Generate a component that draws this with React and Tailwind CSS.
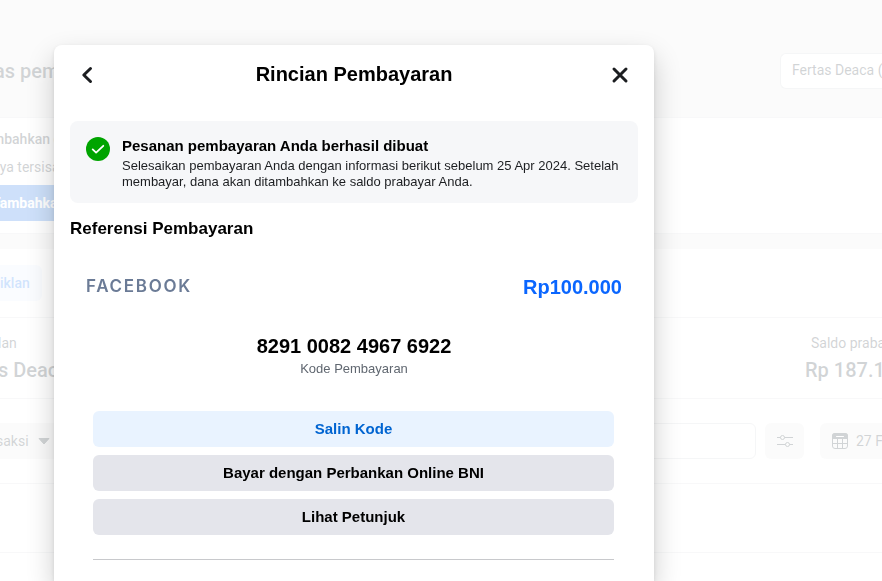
import React, { useState } from 'react';

const CalendarIcon = () => (
  <svg width="16" height="16" viewBox="0 0 16 16" fill="none" stroke="#1c2b33" aria-hidden="true">
    <rect x="0.5" y="0.5" width="15" height="15" rx="2.5" />
    <path d="M0 3a3 3 0 0 1 3-3h10a3 3 0 0 1 3 3v3H0z" fill="#1c2b33" stroke="none" />
    <path d="M5.5 6v9.5M10.5 6v9.5M0.5 10.5h15" />
    <path d="M4.5 3.5h7" stroke="#fff" strokeLinecap="round" />
  </svg>
);

const FilterIcon = () => (
  <svg width="16" height="14" viewBox="0 0 16 14" fill="none" stroke="#1c2b33" aria-hidden="true">
    <circle cx="5.5" cy="3.5" r="2" />
    <circle cx="10.5" cy="10.5" r="2" />
    <path d="M0 3.5h3.5M7.5 3.5H16M0 10.5h8.5M12.5 10.5H16" />
  </svg>
);

const CaretIcon = () => (
  <svg width="12" height="7" viewBox="0 0 12 7" aria-hidden="true">
    <path d="M1 0.5h10L6 6z" fill="#1c2b33" stroke="#1c2b33" strokeLinejoin="round" />
  </svg>
);

const CheckBadge = () => (
  <svg width="24" height="24" viewBox="0 0 24 24" fill="none" className="shrink-0" aria-hidden="true">
    <circle cx="12" cy="12" r="12" fill="#00a400" />
    <path d="M6.7 12.4l3.4 3.2 7.2-6.8" stroke="#fff" strokeWidth="1.8" strokeLinecap="round" strokeLinejoin="round" />
  </svg>
);

const BillingPage = () => (
  <div className="flex min-h-screen flex-col overflow-hidden whitespace-nowrap bg-[#ebebeb] font-['Roboto',sans-serif] text-sm text-[#1c2b33]">
    <header className="flex h-[117px] items-center justify-between pt-6">
      <h1 className="-ml-1.5 text-xl font-medium">as pembayaran</h1>
      <button className="h-9 w-[102px] overflow-hidden rounded-l-md border border-r-0 border-[#ccd0d5] bg-white pb-0.5 pl-[11px] text-left">
        Fertas Deaca (
      </button>
    </header>

    <section className="h-[117px] border-y border-[#dadde1] bg-white pt-[11px]">
      <div className="-ml-2">
        <h2 className="font-medium leading-5">mbahkan dana</h2>
        <p className="mt-2 leading-5">nya tersisa</p>
        <button className="mt-2 h-9 bg-[#0a66e4] pr-4 font-bold text-white">Tambahkan</button>
      </div>
    </section>

    <section className="mt-[15px] grow bg-white">
      <div className="flex h-[68px] items-center">
        <button className="h-9 rounded-r-md bg-[#e3edff] pr-3 font-medium text-[#1877f2]">iklan</button>
      </div>

      <dl className="flex h-[82px] justify-between border-y border-[#dadde1] pt-[15px]">
        <div className="-ml-0.5">
          <dt className="leading-5">lan</dt>
          <dd className="mt-[3px] text-xl font-medium leading-7">s Deaca</dd>
        </div>
        <div className="w-[77px]">
          <dt className="pl-1.5 leading-5">Saldo prabayar</dt>
          <dd className="mt-[3px] text-xl font-medium leading-7">Rp 187.1</dd>
        </div>
      </dl>

      <div className="flex h-[85px] items-center border-b border-[#dadde1]">
        <button className="-ml-1 flex h-9 w-[68px] items-center justify-between bg-[#ebebeb] pr-3.5">
          saksi
          <CaretIcon />
        </button>
        <input
          type="search"
          aria-label="Cari transaksi"
          className="ml-2 h-9 min-w-0 grow rounded-md border border-[#ccd0d5] bg-white"
        />
        <button aria-label="Filter" className="ml-[9px] flex h-9 w-[39px] items-center justify-center rounded-md bg-[#ebebeb]">
          <FilterIcon />
        </button>
        <button className="ml-4 flex h-9 w-[62px] items-center gap-2 overflow-hidden rounded-l-md bg-[#ebebeb] pl-3">
          <span className="shrink-0"><CalendarIcon /></span>
          27 F
        </button>
      </div>
      <div className="h-[69px] border-b border-[#dadde1]" />
    </section>
  </div>
);

const PaymentDialog = ({ onClose }) => {
  const code = '8291 0082 4967 6922';

  const handleCopy = () => {
    navigator.clipboard.writeText(code.replaceAll(' ', ''));
  };

  return (
    <div
      role="dialog"
      aria-labelledby="dialog-title"
      className="w-full max-w-[600px] rounded-t-lg bg-white px-4 shadow-[0_12px_28px_rgba(0,0,0,0.2),0_2px_4px_rgba(0,0,0,0.1)]"
    >
      <header className="flex h-[60px] items-center justify-between px-2">
        <button aria-label="Kembali" onClick={onClose} className="flex size-5 items-center justify-center">
          <svg width="20" height="20" viewBox="0 0 20 20" fill="none" stroke="#1c1e21" strokeWidth="3" strokeLinecap="round" strokeLinejoin="round">
            <path d="M12.5 3.5L5.8 10l6.7 6.5" />
          </svg>
        </button>
        <h1 id="dialog-title" className="pb-0.5 text-xl font-bold leading-6">Rincian Pembayaran</h1>
        <button aria-label="Tutup" onClick={onClose} className="flex size-5 items-center justify-center">
          <svg width="20" height="20" viewBox="0 0 20 20" fill="none" stroke="#1c1e21" strokeWidth="3" strokeLinecap="round">
            <path d="M4 4l12 12M16 4L4 16" />
          </svg>
        </button>
      </header>

      <div className="mt-4 flex gap-3 rounded-lg bg-[#f6f7f9] px-4 pb-[13px] pt-4">
        <CheckBadge />
        <div>
          <h2 className="text-[15px] font-bold leading-[18px]">Pesanan pembayaran Anda berhasil dibuat</h2>
          <p className="mt-[3px] text-[13px] leading-4 text-[#1c1e21]">
            Selesaikan pembayaran Anda dengan informasi berikut sebelum 25 Apr 2024. Setelah membayar, dana akan
            ditambahkan ke saldo prabayar Anda.
          </p>
        </div>
      </div>

      <h2 className="mt-4 text-[17px] font-bold leading-5">Referensi Pembayaran</h2>

      <div className="mt-9 flex items-center justify-between px-4">
        <span className="pb-0.5 font-['Inter',sans-serif] text-[17px] font-semibold leading-5 tracking-widest text-[#6b7b96]">
          FACEBOOK
        </span>
        <span className="text-xl font-bold leading-6 text-[#0a66ff]">Rp100.000</span>
      </div>

      <div className="mt-[35px] text-center">
        <p className="text-xl font-bold leading-6">{code}</p>
        <p className="mt-[3px] text-[13px] leading-4 text-[#606770]">Kode Pembayaran</p>
      </div>

      <div className="ml-[23px] mr-6 mt-[34px] flex flex-col gap-2 border-b border-[#c8c9cc] pb-6 text-[15px] font-bold">
        <button onClick={handleCopy} className="h-9 rounded-md bg-[#e9f3ff] text-[#0064d1]">Salin Kode</button>
        <button className="h-9 rounded-md bg-[#e4e5eb]">Bayar dengan Perbankan Online BNI</button>
        <button className="h-9 rounded-md bg-[#e4e5eb]">Lihat Petunjuk</button>
      </div>
    </div>
  );
};

const App = () => {
  const [open, setOpen] = useState(true);

  return (
    <>
      <BillingPage />
      {open && (
        <div className="fixed inset-0 flex overflow-hidden bg-white/80 pl-[54px] pt-[45px] font-['Liberation_Sans',Arial,sans-serif] text-black">
          <PaymentDialog onClose={() => setOpen(false)} />
        </div>
      )}
    </>
  );
};

export default App;
